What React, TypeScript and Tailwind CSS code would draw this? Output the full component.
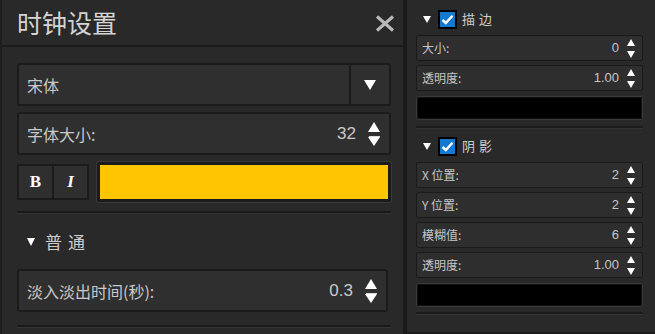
import React from "react";

const cjk = "font-['Noto_Sans_CJK_SC','Liberation_Sans',sans-serif]";

function Spinner({ big }: { big?: boolean }) {
  if (big) {
    return (
      <div className="flex flex-col items-center gap-[4px] w-[12px]">
        <div className="w-0 h-0 border-l-[6px] border-r-[6px] border-b-[10px] border-l-transparent border-r-transparent border-b-white" />
        <div className="flex flex-col items-center">
          <div className="w-[11px] h-[1px] bg-[#dcdcdc]" />
          <div className="w-0 h-0 border-l-[6px] border-r-[6px] border-t-[9px] border-l-transparent border-r-transparent border-t-white" />
        </div>
      </div>
    );
  }
  return (
    <div className="flex flex-col items-center gap-[5px] w-[8px]">
      <div className="w-0 h-0 border-l-[4px] border-r-[4px] border-b-[7px] border-l-transparent border-r-transparent border-b-white" />
      <div className="w-0 h-0 border-l-[4px] border-r-[4px] border-t-[7px] border-l-transparent border-r-transparent border-t-white" />
    </div>
  );
}

function BigRow({ label, value }: { label: string; value: string }) {
  return (
    <div className="h-[43px] flex items-center rounded-[3px] border-2 border-[#1b1b1b] bg-[#2f2f2f] pl-[8px] pr-[9px] text-[16px] text-[#c9c9c9]">
      <span className="flex-1">{label}</span>
      <span className="mr-[12px] font-['Liberation_Sans',sans-serif] text-[17px]">{value}</span>
      <Spinner big />
    </div>
  );
}

function SmallRow({ label, value }: { label: string; value: string }) {
  return (
    <div className="h-[26px] flex items-center rounded-[2px] border border-[#1a1a1a] bg-[#2e2e2e] pl-[5px] pr-[7px] text-[12px] text-[#c6c6c6]">
      <span className="flex-1">{label}</span>
      <span className="mr-[8px] font-['Liberation_Sans',sans-serif] text-[13px]">{value}</span>
      <Spinner />
    </div>
  );
}

function Check() {
  return (
    <div className="w-[19px] h-[19px] border-2 border-black bg-[#1479d0] flex items-center justify-center">
      <svg width="13" height="11" viewBox="0 0 13 11">
        <path d="M1.5 6 L4.8 9 L11.5 1.8" stroke="white" strokeWidth="2.4" fill="none" />
      </svg>
    </div>
  );
}

function SectionHead({ title }: { title: string }) {
  return (
    <div className="h-[20px] flex items-center gap-[4px] pl-[7px] text-[13px] text-[#cdcdcd]">
      <div className="w-0 h-0 border-l-[4px] border-r-[4px] border-t-[7px] border-l-transparent border-r-transparent border-t-white mr-[3px]" />
      <Check />
      <span className="tracking-[4px] ml-[1px]">{title}</span>
    </div>
  );
}

function Swatch() {
  return (
    <div className="h-[24px] rounded-[2px] border border-[#3a3a3a] bg-black shadow-[inset_0_0_0_1px_#111]" />
  );
}

function Sep() {
  return <div className="h-[3px] border-t-2 border-[#1b1b1b] bg-[#333]" />;
}

export default function App() {
  return (
    <div className={`w-[655px] h-[334px] flex bg-[#1c1c1c] overflow-hidden ${cjk}`}>
      {/* Left panel */}
      <div className="w-[403px] h-full border-l-2 border-[#1e1e1e] bg-[#292929] flex flex-col">
        <div className="h-[47px] flex items-center justify-between pl-[15px] pr-[8px] border-b-2 border-[#1b1b1b]">
          <span className="text-[25px] text-[#d4d4d4] leading-none">时钟设置</span>
          <svg width="20" height="17" viewBox="0 0 20 17" className="mt-[2px]">
            <path d="M2 1.5 L18 15.5 M18 1.5 L2 15.5" stroke="#b9b9b9" strokeWidth="3.2" />
          </svg>
        </div>
        <div className="pl-[15px] pr-[12px] pt-[16px] flex flex-col">
          <div className="h-[43px] flex rounded-[3px] border-2 border-[#1b1b1b] bg-[#2f2f2f] text-[16px] text-[#c9c9c9]">
            <div className="flex-1 flex items-center pl-[8px]">宋体</div>
            <div className="w-[40px] border-l-2 border-[#1b1b1b] flex items-center justify-center">
              <div className="w-0 h-0 border-l-[6px] border-r-[6px] border-t-[10px] border-l-transparent border-r-transparent border-t-white" />
            </div>
          </div>
          <div className="mt-[6px]">
            <BigRow label="字体大小:" value="32" />
          </div>
          <div className="mt-[7px] h-[40px] flex items-center gap-[8px]">
            <div className="h-[36px] flex border-2 border-[#1b1b1b] bg-[#1b1b1b] gap-[2px]">
              <div className="w-[33px] bg-[#2f2f2f] flex items-center justify-center font-['Liberation_Serif',serif] font-bold text-[17px] text-white">B</div>
              <div className="w-[33px] bg-[#2f2f2f] flex items-center justify-center font-['Liberation_Serif',serif] font-bold italic text-[17px] text-white">I</div>
            </div>
            <div className="flex-1 h-[40px] rounded-[2px] border-[3px] border-[#1b1b1b] bg-[#ffc600] shadow-[0_0_0_1px_#3a3a3a]" />
          </div>
          <div className="mt-[9px]">
            <Sep />
          </div>
          <div className="h-[55px] flex items-center gap-[10px] pl-[10px] text-[17px] text-[#cdcdcd]">
            <div className="w-0 h-0 border-l-[4px] border-r-[4px] border-t-[8px] border-l-transparent border-r-transparent border-t-white" />
            <span className="tracking-[6px]">普通</span>
          </div>
          <div className="pr-[3px]">
            <BigRow label="淡入淡出时间(秒):" value="0.3" />
          </div>
          <div className="mt-[13px]">
            <Sep />
          </div>
        </div>
      </div>
      {/* Divider */}
      <div className="w-[4px] h-full bg-[#1a1a1a]" />
      {/* Right panel */}
      <div className="flex-1 h-[332px] bg-[#292929] pl-[9px] pr-[12px] flex flex-col">
        <div className="pt-[9px]">
          <SectionHead title="描边" />
        </div>
        <div className="mt-[6px] flex flex-col gap-[4px]">
          <SmallRow label="大小:" value="0" />
          <SmallRow label="透明度:" value="1.00" />
          <div className="mt-[1px]">
            <Swatch />
          </div>
        </div>
        <div className="mt-[6px]">
          <Sep />
        </div>
        <div className="pt-[7px]">
          <SectionHead title="阴影" />
        </div>
        <div className="mt-[6px] flex flex-col gap-[4px]">
          <SmallRow label="X 位置:" value="2" />
          <SmallRow label="Y 位置:" value="2" />
          <SmallRow label="模糊值:" value="6" />
          <SmallRow label="透明度:" value="1.00" />
          <div className="mt-[1px]">
            <Swatch />
          </div>
        </div>
        <div className="mt-[5px]">
          <Sep />
        </div>
      </div>
    </div>
  );
}
